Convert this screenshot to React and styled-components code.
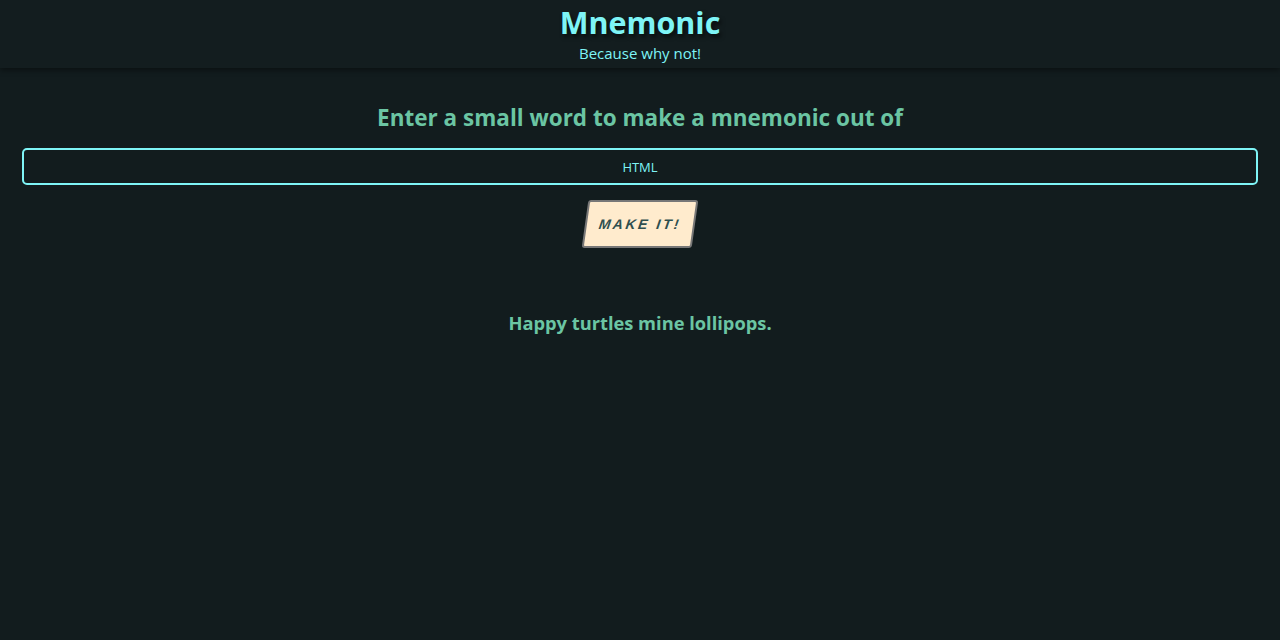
import React, { useState } from "react"
import styled, { createGlobalStyle } from "styled-components"

const GlobalStyle = createGlobalStyle`
  html, body {
    margin: 0;
    padding: 0;
    background: #121c1e;
    min-height: 100%;
  }
  body {
    font-family: "Open Sans", "Noto Sans", sans-serif;
  }
`

const Header = styled.header`
  display: flex;
  flex-direction: column;
  align-items: center;
  height: 68px;
  background: #131d1f;
  box-shadow: 0 2px 6px rgba(0, 0, 0, 0.45);
`

const Title = styled.h1`
  margin: 2px 0 0;
  font-size: 30.5px;
  line-height: 40px;
  font-weight: 700;
  color: #7ef4f6;
  text-shadow: 2px 3px 4px rgba(0, 0, 0, 0.6);
`

const Subtitle = styled.div`
  font-size: 15px;
  line-height: 20px;
  color: #7ef4f6;
  margin-top: 1px;
`

const Main = styled.main`
  display: flex;
  flex-direction: column;
  align-items: center;
  padding: 0 22px;
`

const Prompt = styled.h2`
  margin: 35px 0 15px;
  font-size: 22.5px;
  line-height: 30px;
  font-weight: 700;
  color: #6bc5a3;
`

const WordInput = styled.input`
  box-sizing: border-box;
  width: 100%;
  height: 37px;
  background: transparent;
  border: 2px solid #7ef4f6;
  border-radius: 5px;
  color: #7ef4f6;
  font-family: "Open Sans", sans-serif;
  font-size: 13px;
  text-align: center;
  outline: none;
`

const MakeButton = styled.button`
  margin-top: 15px;
  width: 110px;
  height: 48px;
  background: #ffebcd;
  border: 2px solid #777;
  border-radius: 3px;
  transform: skewX(-8deg);
  color: #2f4f4f;
  font-family: "Liberation Sans", Arial, sans-serif;
  font-size: 14px;
  font-weight: 700;
  font-style: italic;
  letter-spacing: 2.5px;
  cursor: pointer;
`

const Result = styled.p`
  margin: 62px 0 0;
  font-size: 18.3px;
  line-height: 26px;
  font-weight: 700;
  color: #6bc5a3;
`

export default function App() {
  const [word, setWord] = useState("HTML")
  return (
    <>
      <GlobalStyle />
      <Header>
        <Title>Mnemonic</Title>
        <Subtitle>Because why not!</Subtitle>
      </Header>
      <Main>
        <Prompt>Enter a small word to make a mnemonic out of</Prompt>
        <WordInput value={word} onChange={e => setWord(e.target.value)} />
        <MakeButton>MAKE IT!</MakeButton>
        <Result>Happy turtles mine lollipops.</Result>
      </Main>
    </>
  )
}
